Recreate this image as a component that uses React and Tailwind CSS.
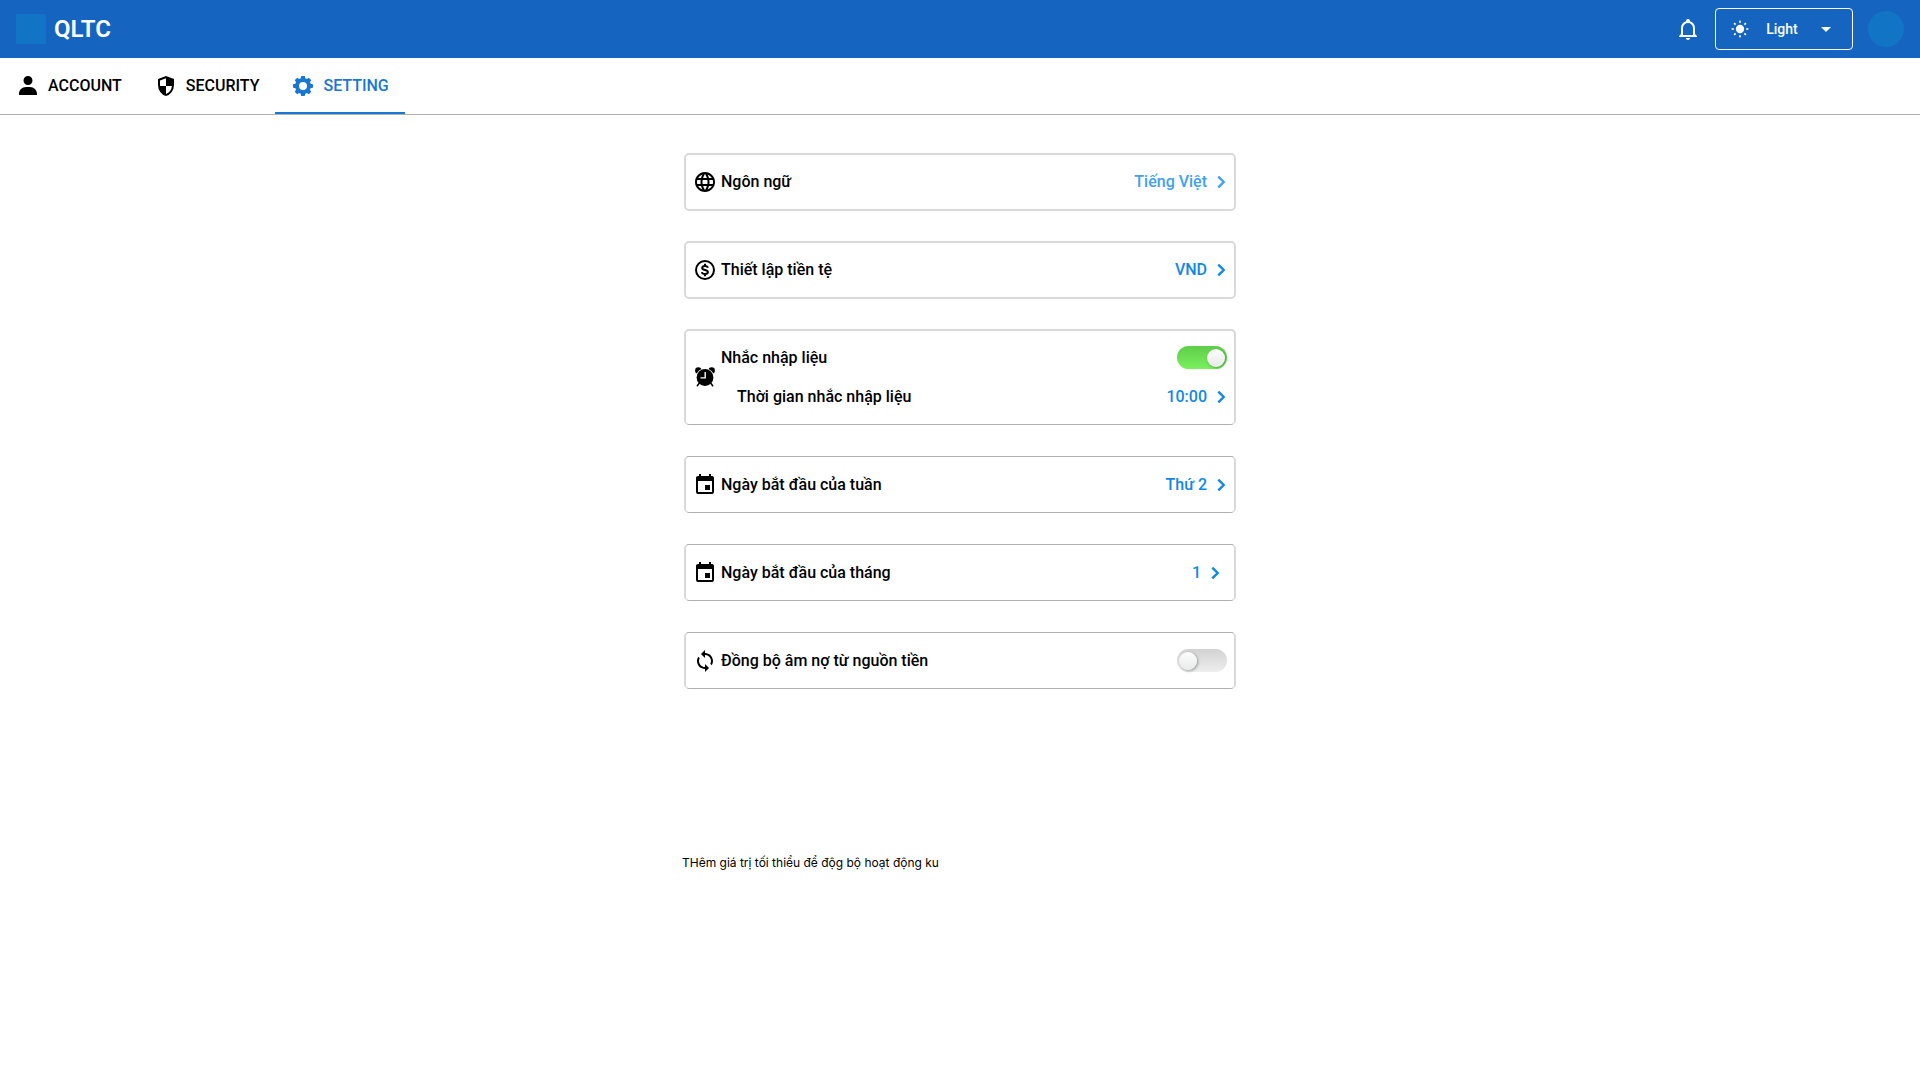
const ICONS = {
  user: "M7.5 6.5C7.5 8.981 9.519 11 12 11s4.5-2.019 4.5-4.5S14.481 2 12 2 7.5 4.019 7.5 6.5zM20 21h1v-1c0-3.859-3.141-7-7-7h-4c-3.86 0-7 3.141-7 7v1h17z",
  security:
    "M12 22q-3.475-.875-5.738-3.988T4 11.1V5l8-3l8 3v6.1q0 3.8-2.262 6.913T12 22Zm0-2.1q2.425-.75 4.05-2.963T17.95 12H12V4.125l-6 2.25v5.175q0 .175.05.45H12v7.9Z",
  bell: "M10 21h4c0 1.1-.9 2-2 2s-2-.9-2-2m11-2v1H3v-1l2-2v-6c0-3.1 2.03-5.83 5-6.71V4a2 2 0 0 1 2-2a2 2 0 0 1 2 2v.29c2.97.88 5 3.61 5 6.71v6l2 2m-4-8a5 5 0 0 0-5-5a5 5 0 0 0-5 5v7h10z",
  globe:
    "M11.99 2C6.47 2 2 6.48 2 12s4.47 10 9.99 10C17.52 22 22 17.52 22 12S17.52 2 11.99 2zm6.93 6h-2.95a15.65 15.65 0 0 0-1.38-3.56A8.03 8.03 0 0 1 18.92 8zM12 4.04c.83 1.2 1.48 2.53 1.91 3.96h-3.82c.43-1.43 1.08-2.76 1.91-3.96zM4.26 14C4.1 13.36 4 12.69 4 12s.1-1.36.26-2h3.38c-.08.66-.14 1.32-.14 2 0 .68.06 1.34.14 2H4.26zm.82 2h2.95c.32 1.25.78 2.45 1.38 3.56A7.987 7.987 0 0 1 5.08 16zm2.95-8H5.08a7.987 7.987 0 0 1 4.33-3.56A15.65 15.65 0 0 0 8.03 8zM12 19.96c-.83-1.2-1.48-2.53-1.91-3.96h3.82c-.43 1.43-1.08 2.76-1.91 3.96zM14.34 14H9.66c-.09-.66-.16-1.32-.16-2 0-.68.07-1.35.16-2h4.68c.09.65.16 1.32.16 2 0 .68-.07 1.34-.16 2zm.25 5.56c.6-1.11 1.06-2.31 1.38-3.56h2.95a8.03 8.03 0 0 1-4.33 3.56zM16.36 14c.08-.66.14-1.32.14-2 0-.68-.06-1.34-.14-2h3.38c.16.64.26 1.31.26 2s-.1 1.36-.26 2h-3.38z",
  calendar:
    "M19 3h-1V1h-2v2H8V1H6v2H5c-1.11 0-2 .9-2 2v14a2 2 0 0 0 2 2h14c1.1 0 2-.9 2-2V5c0-1.1-.9-2-2-2zm0 16H5V8h14v11zM12 12h5v5h-5z",
  sync: "M12 4V1L8 5l4 4V6c3.31 0 6 2.69 6 6 0 1.01-.25 1.97-.7 2.8l1.46 1.46A7.93 7.93 0 0 0 20 12c0-4.42-3.58-8-8-8zm0 14c-3.31 0-6-2.69-6-6 0-1.01.25-1.97.7-2.8L5.24 7.74A7.93 7.93 0 0 0 4 12c0 4.42 3.58 8 8 8v3l4-4-4-4v3z",
  caret: "M7 10l5 5 5-5z",
};

function Icon({ name }) {
  return (
    <svg viewBox="0 0 24 24" fill="currentColor" aria-hidden="true" className="size-6">
      <path fillRule="evenodd" d={ICONS[name]} />
    </svg>
  );
}

function Chevron() {
  return (
    <svg viewBox="6 0 12 24" fill="none" stroke="currentColor" strokeWidth="2.4" aria-hidden="true" className="h-6 w-3">
      <path d="M9.300 6.600l5.400 5.400-5.400 5.400" />
    </svg>
  );
}

function GearIcon() {
  return (
    <svg viewBox="0 0 24 24" aria-hidden="true" className="size-6">
      <circle cx="12" cy="12" r="6" fill="none" stroke="currentColor" strokeWidth="4" />
      {[0, 45, 90, 135, 180, 225, 270, 315].map((a) => (
        <rect key={a} x="9.900" y="2" width="4.200" height="4" rx="1" fill="currentColor" transform={`rotate(${a} 12 12)`} />
      ))}
    </svg>
  );
}

function SunIcon() {
  return (
    <svg viewBox="0 0 24 24" fill="currentColor" aria-hidden="true" className="size-5">
      <circle cx="12" cy="12" r="5" />
      {[0, 45, 90, 135, 180, 225, 270, 315].map((a) => (
        <rect key={a} x="11" y="2" width="2" height="2.500" transform={`rotate(${a} 12 12)`} />
      ))}
    </svg>
  );
}

function CoinIcon() {
  return (
    <svg viewBox="0 0 24 24" fill="none" stroke="currentColor" strokeWidth="2" aria-hidden="true" className="size-6">
      <circle cx="12" cy="12" r="9" />
      <path d="M14.900 9.700C14.600 8.400 13.500 7.900 12 7.900c-1.700 0-2.800.8-2.800 2 0 2.900 5.700 1.300 5.700 4.200 0 1.200-1.200 2-2.900 2-1.600 0-2.800-.6-3.100-2M12 5.800v2.500M12 15.700v2.500" />
    </svg>
  );
}

function AlarmIcon() {
  return (
    <svg viewBox="0 0 24 24" fill="currentColor" aria-hidden="true" className="size-6">
      <circle cx="5.300" cy="5.400" r="3.200" />
      <circle cx="18.700" cy="5.400" r="3.200" />
      <circle cx="12" cy="12.500" r="9.300" fill="white" />
      <path d="M6 18.500L4.300 20.700M18 18.500l1.700 2.200" stroke="currentColor" strokeWidth="1.500" strokeLinecap="round" />
      <circle cx="12" cy="12.500" r="8.400" />
      <path d="M12.200 7v5.900H7.500" fill="none" stroke="white" strokeWidth="1.400" />
    </svg>
  );
}

const DRAWN = { coin: CoinIcon, alarm: AlarmIcon, gear: GearIcon };

function AnyIcon({ name }) {
  const Drawn = DRAWN[name];
  return Drawn ? <Drawn /> : <Icon name={name} />;
}

function Tab({ icon, label, active }) {
  return (
    <a
      href="#"
      aria-current={active ? "page" : undefined}
      className={`flex items-center gap-2 px-4 ${active ? "text-[#1976d2] shadow-[inset_0_-2px_0_#1976d2]" : "text-black"}`}
    >
      <AnyIcon name={icon} />
      {label}
    </a>
  );
}

function ValueButton({ label, value, className = "text-[#1188e6]" }) {
  return (
    <button type="button" aria-label={`${label}: ${value}`} className={`flex items-center gap-2 ${className}`}>
      {value}
      <Chevron />
    </button>
  );
}

function Toggle({ label, defaultChecked }) {
  return (
    <label className="relative flex cursor-pointer">
      <input type="checkbox" role="switch" aria-label={label} defaultChecked={defaultChecked} className="peer sr-only" />
      <span className="flex h-[23px] w-[50px] items-center rounded-full bg-linear-to-b from-[#d2d2d2] to-[#eeeeee] px-0.5 peer-checked:justify-end peer-checked:from-[#5fce4a] peer-checked:to-[#79f05e]">
        <span className="size-[18px] rounded-full bg-linear-to-b from-[#fcfcfc] to-[#e9ebea] shadow-[1px_1px_3px_rgba(0,0,0,0.35)]" />
      </span>
    </label>
  );
}

const SOFT = "h-[58px] border-2 border-[#d9d9d9]";
const CRISP = "h-[57px] border-x-2 border-y border-x-[#d9d9d9] border-y-[#b0b0b0]";

function Card({ icon, label, edge = CRISP, children }) {
  return (
    <section className={`flex items-center justify-between rounded-[5px] px-[7px] ${edge}`}>
      <div className="flex items-center gap-1">
        <AnyIcon name={icon} />
        <h2>{label}</h2>
      </div>
      {children}
    </section>
  );
}

export default function App() {
  return (
    <div className="min-h-screen bg-white font-['Roboto',sans-serif] text-base font-medium text-black">
      <header className="flex h-[58px] items-center justify-between bg-[#1565c0] px-4 text-white">
        <div className="flex items-center gap-2">
          <span className="size-[30px] bg-[#1274c5]" />
          <h1 className="text-2xl font-semibold">QLTC</h1>
        </div>
        <div className="flex items-center gap-[15px]">
          <button type="button" aria-label="Notifications">
            <Icon name="bell" />
          </button>
          <button
            type="button"
            aria-haspopup="listbox"
            className="flex h-[42px] w-[138px] items-center justify-between rounded-[4px] border border-white px-3.5 text-sm"
          >
            <SunIcon />
            Light
            <Icon name="caret" />
          </button>
          <button type="button" aria-label="Profile" className="size-9 rounded-full bg-[#1274c5]" />
        </div>
      </header>

      <nav className="flex h-[57px] border-b border-[#b0b0b0]">
        <Tab icon="user" label="ACCOUNT" />
        <Tab icon="security" label="SECURITY" />
        <Tab icon="gear" label="SETTING" active />
      </nav>

      <main className="mx-auto max-w-[556px] pt-[38px]">
        <div className="flex flex-col gap-[31px] px-0.5">
          <div className="flex flex-col gap-[30px]">
            <Card icon="globe" label="Ngôn ngữ" edge={SOFT}>
              <ValueButton label="Ngôn ngữ" value="Tiếng Việt" className="text-[#42a0ec]" />
            </Card>
            <Card icon="coin" label="Thiết lập tiền tệ" edge={SOFT}>
              <ValueButton label="Thiết lập tiền tệ" value="VND" />
            </Card>
            <section className="flex h-24 items-center gap-1 rounded-[5px] border-x-2 border-t-2 border-b border-x-[#d9d9d9] border-t-[#d9d9d9] border-b-[#b0b0b0] px-[7px] pb-px">
              <AnyIcon name="alarm" />
              <div className="flex grow flex-col gap-[15px]">
                <div className="flex h-6 items-center justify-between">
                  <h2>Nhắc nhập liệu</h2>
                  <Toggle label="Nhắc nhập liệu" defaultChecked />
                </div>
                <div className="flex h-6 items-center justify-between pl-4">
                  <h3>Thời gian nhắc nhập liệu</h3>
                  <ValueButton label="Thời gian nhắc nhập liệu" value="10:00" />
                </div>
              </div>
            </section>
          </div>
          <Card icon="calendar" label="Ngày bắt đầu của tuần">
            <ValueButton label="Ngày bắt đầu của tuần" value="Thứ 2" />
          </Card>
          <Card icon="calendar" label="Ngày bắt đầu của tháng">
            <ValueButton label="Ngày bắt đầu của tháng" value="1" className="pr-1.5 text-[#1188e6]" />
          </Card>
          <Card icon="sync" label="Đồng bộ âm nợ từ nguồn tiền">
            <Toggle label="Đồng bộ âm nợ từ nguồn tiền" />
          </Card>
        </div>
        <p className="mt-[166px] font-['Inter',sans-serif] text-xs font-normal">
          THêm giá trị tối thiểu để độg bộ hoạt động ku
        </p>
      </main>
    </div>
  );
}
